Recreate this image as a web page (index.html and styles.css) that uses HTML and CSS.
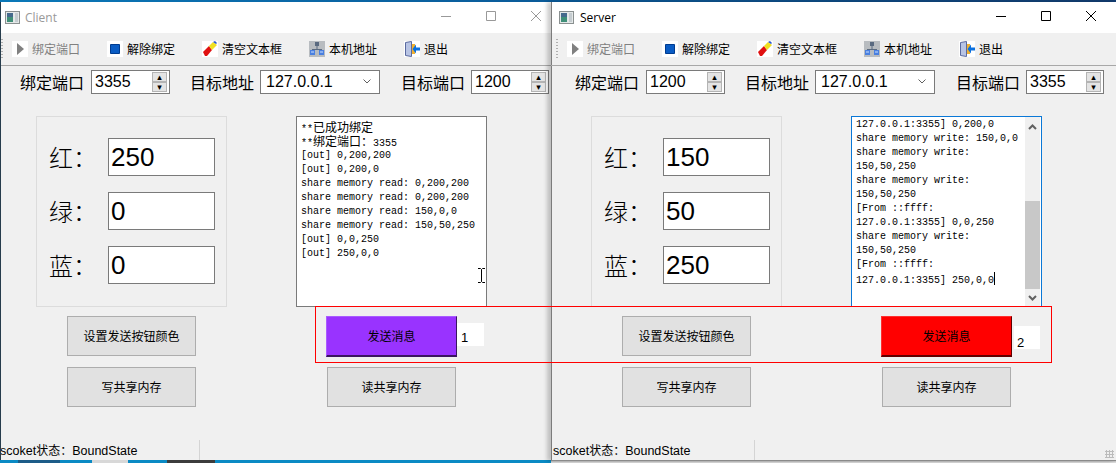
FILE: index.html
```html
<!DOCTYPE html>
<html lang="zh">
<head>
<meta charset="utf-8">
<title>Client / Server</title>
<link rel="stylesheet" href="styles.css">
</head>
<body>
<div class="desktop">
  <div class="topstrip"></div>
  <div class="bottomstrip"><i class="b1"></i><i class="b2"></i><i class="b3"></i><i class="b4"></i></div>

  <section class="window client">
    <header class="titlebar">
      <svg class="appicon" viewBox="0 0 15 13"><rect x=".5" y=".5" width="14" height="12" fill="#e4e8e8" stroke="#8a9090"/><rect x="2" y="2" width="6" height="9" fill="#3f8f78"/><rect x="2" y="2" width="6" height="4" fill="#456a8c"/><rect x="10" y="2" width="3" height="9" fill="#c5ccd0"/></svg>
      <span class="wintitle">Client</span>
      <span class="winbtns">
        <svg viewBox="0 0 10 10"><path d="M0 5.500h10"/></svg>
        <svg viewBox="0 0 10 10"><path d="M.5.5h9v9h-9z"/></svg>
        <svg viewBox="0 0 10 10"><path d="M0 0l10 10M10 0L0 10"/></svg>
      </span>
    </header>
    <div class="inner">
      <nav class="toolbar">
        <span class="grip"></span>
        <span class="tool off"><svg viewBox="0 0 16 16"><path class="w" d="M0 0h16v16H0z"/><path fill="#808080" d="M5 2l7 6-7 6z"/></svg>绑定端口</span>
        <span class="tool"><svg viewBox="0 0 16 16"><path class="w" d="M0 0h16v16H0z"/><path fill="#0a5cc4" stroke="#003c90" d="M3.500 3.500h9v9h-9z"/></svg>解除绑定</span>
        <span class="tool"><svg viewBox="0 0 16 16"><path class="w" d="M0 0h16v16H0z"/><path fill="#e01010" d="M1 11l6-6 3 4-5 6H3z"/><path fill="#f0e020" d="M7 5l4-4 4 3-5 5z"/><path fill="#2858d0" d="M11 1l2-1 2 2-1 1z"/></svg>清空文本框</span>
        <span class="tool"><svg viewBox="0 0 16 16"><path fill="#b8bcc0" d="M0 0h16v16H0z"/><path fill="#5a6a80" d="M6 1h4v4H6z"/><path fill="#5a6a80" d="M7.500 5h1v4h-1zM3 8h10v1H3z"/><path fill="#4a80e0" d="M1 9h5v5H1zM10 9h5v5h-5z"/><path fill="#8ab0f0" d="M2 10h3v2H2zM11 10h3v2h-3z"/></svg>本机地址</span>
        <span class="tool"><svg viewBox="0 0 16 16"><path class="w" d="M0 0h16v16H0z"/><path fill="#b8c4e4" stroke="#5a6aa0" d="M1.500 1.500l6 -1v15l-6-1z"/><path fill="#f0b030" d="M8 3h3v10H8z"/><path fill="#0a70e0" d="M16 6.500h-4V3.500L8.500 8l3.500 4.500V9.500h4z"/></svg>退出</span>
      </nav>
      <div class="formrow">
        <label class="fl">绑定端口</label>
        <span class="spin s1"><b>3355</b><span class="arrows"><i>▴</i><i>▾</i></span></span>
        <label class="fl l2">目标地址</label>
        <span class="combo"><b>127.0.0.1</b><svg viewBox="0 0 8 5"><path d="M.5.500l3.500 3.500 3.500-3.500"/></svg></span>
        <label class="fl l3">目标端口</label>
        <span class="spin s2"><b>1200</b><span class="arrows"><i>▴</i><i>▾</i></span></span>
      </div>
      <main class="board">
        <div class="col-a">
          <div class="colors">
            <div class="colorrow"><span class="cl">红：</span><span class="cv">250</span></div>
            <div class="colorrow"><span class="cl">绿：</span><span class="cv">0</span></div>
            <div class="colorrow"><span class="cl">蓝：</span><span class="cv">0</span></div>
          </div>
          <button class="btn first">设置发送按钮颜色</button>
          <button class="btn">写共享内存</button>
        </div>
        <div class="col-b">
          <div class="log"><div class="logtext"><span class="z">**<u>已成功绑定</u></span><span class="z">**<u>绑定端口：</u>3355</span>[out] 0,200,200
[out] 0,200,0
share memory read: 0,200,200
share memory read: 0,200,200
share memory read: 150,0,0
share memory read: 150,50,250
[out] 0,0,250
[out] 250,0,0</div></div>
          <div class="sendrow"><button class="send purple">发送消息</button><span class="count c1">1</span></div>
          <button class="btn read">读共享内存</button>
        </div>
      </main>
      <footer class="status"><span class="st">scoket<u>状态：</u>BoundState</span></footer>
    </div>
  </section>

  <section class="window server">
    <header class="titlebar">
      <svg class="appicon" viewBox="0 0 15 13"><rect x=".5" y=".5" width="14" height="12" fill="#e4e8e8" stroke="#8a9090"/><rect x="2" y="2" width="6" height="9" fill="#3f8f78"/><rect x="2" y="2" width="6" height="4" fill="#456a8c"/><rect x="10" y="2" width="3" height="9" fill="#c5ccd0"/></svg>
      <span class="wintitle">Server</span>
      <span class="winbtns">
        <svg viewBox="0 0 10 10"><path d="M0 5.500h10"/></svg>
        <svg viewBox="0 0 10 10"><path d="M.5.5h9v9h-9z"/></svg>
        <svg viewBox="0 0 10 10"><path d="M0 0l10 10M10 0L0 10"/></svg>
      </span>
    </header>
    <div class="inner">
      <nav class="toolbar">
        <span class="grip"></span>
        <span class="tool off"><svg viewBox="0 0 16 16"><path class="w" d="M0 0h16v16H0z"/><path fill="#808080" d="M5 2l7 6-7 6z"/></svg>绑定端口</span>
        <span class="tool"><svg viewBox="0 0 16 16"><path class="w" d="M0 0h16v16H0z"/><path fill="#0a5cc4" stroke="#003c90" d="M3.500 3.500h9v9h-9z"/></svg>解除绑定</span>
        <span class="tool"><svg viewBox="0 0 16 16"><path class="w" d="M0 0h16v16H0z"/><path fill="#e01010" d="M1 11l6-6 3 4-5 6H3z"/><path fill="#f0e020" d="M7 5l4-4 4 3-5 5z"/><path fill="#2858d0" d="M11 1l2-1 2 2-1 1z"/></svg>清空文本框</span>
        <span class="tool"><svg viewBox="0 0 16 16"><path fill="#b8bcc0" d="M0 0h16v16H0z"/><path fill="#5a6a80" d="M6 1h4v4H6z"/><path fill="#5a6a80" d="M7.500 5h1v4h-1zM3 8h10v1H3z"/><path fill="#4a80e0" d="M1 9h5v5H1zM10 9h5v5h-5z"/><path fill="#8ab0f0" d="M2 10h3v2H2zM11 10h3v2h-3z"/></svg>本机地址</span>
        <span class="tool"><svg viewBox="0 0 16 16"><path class="w" d="M0 0h16v16H0z"/><path fill="#b8c4e4" stroke="#5a6aa0" d="M1.500 1.500l6 -1v15l-6-1z"/><path fill="#f0b030" d="M8 3h3v10H8z"/><path fill="#0a70e0" d="M16 6.500h-4V3.500L8.500 8l3.500 4.500V9.500h4z"/></svg>退出</span>
      </nav>
      <div class="formrow">
        <label class="fl">绑定端口</label>
        <span class="spin s1"><b>1200</b><span class="arrows"><i>▴</i><i>▾</i></span></span>
        <label class="fl l2">目标地址</label>
        <span class="combo"><b>127.0.0.1</b><svg viewBox="0 0 8 5"><path d="M.5.500l3.500 3.500 3.500-3.500"/></svg></span>
        <label class="fl l3">目标端口</label>
        <span class="spin s2"><b>3355</b><span class="arrows"><i>▴</i><i>▾</i></span></span>
      </div>
      <main class="board">
        <div class="col-a">
          <div class="colors">
            <div class="colorrow"><span class="cl">红：</span><span class="cv">150</span></div>
            <div class="colorrow"><span class="cl">绿：</span><span class="cv">50</span></div>
            <div class="colorrow"><span class="cl">蓝：</span><span class="cv">250</span></div>
          </div>
          <button class="btn first">设置发送按钮颜色</button>
          <button class="btn">写共享内存</button>
        </div>
        <div class="col-b">
          <div class="log focus"><div class="logtext">127.0.0.1:3355] 0,200,0
share memory write: 150,0,0
share memory write:
150,50,250
share memory write:
150,50,250
[From ::ffff:
127.0.0.1:3355] 0,0,250
share memory write:
150,50,250
[From ::ffff:
127.0.0.1:3355] 250,0,0<span class="caret"></span></div>
            <div class="scroll"><svg viewBox="0 0 9 6"><path d="M1 5l3.500-3.500L8 5"/></svg><span class="thumb"></span><svg class="down" viewBox="0 0 9 6"><path d="M1 1l3.500 3.500L8 1"/></svg></div>
          </div>
          <div class="sendrow"><button class="send red">发送消息</button><span class="count c2">2</span></div>
          <button class="btn read">读共享内存</button>
        </div>
      </main>
      <footer class="status"><span class="st">scoket<u>状态：</u>BoundState</span><span class="sizegrip"></span></footer>
    </div>
  </section>

  <svg class="ibeam" viewBox="0 0 7 15"><path d="M0 .5h2.500L3.500 1.500 4.500.5H7M3.500 1.500v12M0 14.500h2.500l1-1 1 1H7"/></svg>
  <div class="highlight"></div>
</div>
</body>
</html>
```
FILE: styles.css
```css
* { box-sizing: border-box; }
html, body { margin: 0; padding: 0; }
body { width: 1116px; height: 463px; overflow: hidden; }
u { text-decoration: none; }
b { font-weight: normal; }
i { font-style: normal; }

.desktop { position: relative; width: 1116px; height: 463px; background: #263c4c; overflow: hidden; font-family: "Noto Sans CJK SC", sans-serif; color: #000; }
.topstrip { position: absolute; left: 0; top: 0; width: 1116px; height: 2px; background: linear-gradient(90deg, #0a78b8, #0a5a98 50%, #123c70); }
.bottomstrip { position: absolute; left: 0; top: 460px; width: 1116px; height: 3px; background: #0a8ac4; }
.bottomstrip i { position: absolute; top: 0; height: 3px; }
.b1 { left: 18px; width: 42px; background: #1c5c88; }
.b2 { left: 92px; width: 36px; background: #d8d8d8; }
.b3 { left: 167px; width: 48px; background: #3c3c3c; }
.b4 { left: 551px; width: 565px; background: linear-gradient(#a8a8a8, #e4e4e4); }

.window { position: absolute; top: 2px; height: 458px; background: #f0f0f0; overflow: hidden; display: flex; flex-direction: column; }
.client { left: 1px; width: 550px; }
.server { left: 551px; width: 565px; height: 459px; border-left: 1px solid #7c7c7c; border-bottom: 1px solid #8a8a8a; box-shadow: -4px 0 4px rgba(0,0,0,.2); overflow: visible; }

.titlebar { flex: none; height: 31px; background: #fff; display: flex; align-items: center; padding-left: 7px; }
.client .titlebar { padding-left: 4px; color: #999; }
.appicon { width: 15px; height: 13px; margin-top: -1px; }
.wintitle { margin-left: 6px; font: 12px/16px "Open Sans", sans-serif; color: #000; }
.client .wintitle { color: #999; margin-left: 5px; }
.winbtns { display: flex; position: absolute; top: 9px; }
.client .winbtns { left: 440px; }
.server .winbtns { left: 444px; }
.winbtns svg { width: 10px; height: 10px; margin-right: 35px; fill: none; stroke: #000; stroke-width: 1; flex: none; }
.winbtns svg:last-child { margin-right: 0; }
.client .winbtns svg { stroke: #999; }

.inner { flex: 1; display: flex; flex-direction: column; width: 565px; min-height: 0; }
.client .inner { margin-left: -5px; }
.server .inner { margin-left: -1px; }

.toolbar { flex: none; height: 33px; border-bottom: 1px solid #a8a8a8; display: flex; align-items: center; gap: 27px; padding: 0 0 1px 16px; position: relative; font-size: 12px; }
.grip { position: absolute; left: 5px; top: 6px; width: 2px; height: 21px; background: repeating-linear-gradient(#b0b0b0 0 1px, transparent 1px 3px); }
.tool { display: flex; align-items: center; gap: 4px; line-height: 16px; white-space: nowrap; }
.tool svg { width: 16px; height: 16px; }
.tool .w { fill: #fff; }
.tool.off { color: #808080; }

.formrow { flex: none; height: 25px; margin-top: 3px; display: flex; align-items: center; padding-left: 24px; font-size: 16px; }
.fl { width: 62px; flex: none; white-space: nowrap; line-height: 24px; }
.l2 { margin-left: 20px; }
.l3 { margin-left: 21px; }
.spin, .combo { height: 24px; flex: none; background: #fff; border: 1px solid #7a7a7a; display: flex; align-items: center; font: 16px/22px "Liberation Sans", sans-serif; margin-left: 8px; position: relative; }
.spin { padding-left: 3px; }
.spin b, .combo b { flex: 1; }
.s1 { width: 79px; margin-left: 9px; }
.s2 { width: 78px; }
.combo { width: 120px; padding-left: 5px; }
.combo svg { width: 8px; height: 5px; margin-right: 8px; fill: none; stroke: #606060; }
.arrows { width: 15px; height: 20px; margin-right: 2px; display: flex; flex-direction: column; gap: 0; }
.arrows i { flex: 1; display: flex; align-items: center; justify-content: center; background: #e4e4e4; border: 1px solid #b4b4b4; font: 9px/8px "DejaVu Sans", sans-serif; color: #000; }

.board { flex: none; height: 340px; display: flex; padding-top: 22px; }
.col-a { width: 254px; padding-left: 40px; display: flex; flex-direction: column; align-items: flex-start; }
.col-b { width: 300px; padding-left: 46px; display: flex; flex-direction: column; align-items: flex-start; }

.colors { width: 191px; height: 191px; border: 1px solid #dcdcdc; padding: 21px 0 0 12px; display: flex; flex-direction: column; gap: 16px; }
.colorrow { display: flex; align-items: center; height: 38px; }
.cl { width: 59px; font-size: 24px; font-weight: 300; line-height: 38px; white-space: nowrap; }
.cv { width: 107px; height: 38px; background: #fff; border: 1px solid #7a7a7a; font: 26px/36px "Liberation Sans", sans-serif; padding-left: 2px; }

.btn { width: 129px; height: 40px; background: #e1e1e1; border: 1px solid #adadad; font: 12px/16px "Noto Sans CJK SC", sans-serif; color: #000; padding: 0; }
.btn.first { margin: 9px 0 0 31px; }
.col-a .btn + .btn { margin: 11px 0 0 31px; }
.btn.read { margin: 10px 0 0 31px; }

.log { width: 191px; height: 191px; flex: none; background: #fff; border: 1px solid #7a7a7a; padding: 4px 0 0 4px; font: 10px/14px "Liberation Mono", monospace; white-space: pre; display: flex; }
.log u { font: 12px/14px "Noto Sans CJK SC", sans-serif; }
.log .z { display: block; height: 14px; margin-top: -1px; margin-bottom: 1px; }
.log .z + .z { margin-top: -1px; }
.log.focus { border-color: #0a78d7; padding: 0 0 0 4px; justify-content: space-between; }
.logtext { flex: 1; }
.focus .logtext { margin-top: 1px; }
.caret { display: inline-block; width: 1px; height: 13px; background: #000; vertical-align: -2px; }
.scroll { width: 15px; margin-right: 1px; background: #f0f0f0; display: flex; flex-direction: column; align-items: center; position: relative; padding-top: 7px; }
.scroll svg { width: 9px; height: 6px; fill: none; stroke: #606060; stroke-width: 2; flex: none; }
.scroll .thumb { width: 15px; height: 88px; background: #c8c8c8; margin-top: 71px; flex: none; }
.scroll .down { margin-top: 6px; }

.sendrow { display: flex; align-items: flex-start; margin: 9px 0 0 30px; }
.send { width: 131px; height: 41px; font: 12px/16px "Noto Sans CJK SC", sans-serif; color: #000; padding: 0; border: 1px solid; border-width: 1px 1px 2px 1px; }
.purple { background: #9933ff; border-color: #a95cff #3a1560 #3a1560 #a95cff; }
.red { background: #ff0000; border-color: #ff3030 #600000 #600000 #ff3030; }
.count { width: 27px; height: 23px; background: #fff; font: 13px/24px "Liberation Sans", sans-serif; padding: 3px 0 0 4px; margin-top: 7px; overflow: hidden; }
.c2 { margin: 10px 0 0 2px; width: 26px; padding: 5px 0 0 3px; }

.status { flex: 1; display: flex; align-items: center; position: relative; font: 12px/16px "Noto Sans CJK SC", sans-serif; padding-top: 6px; }
.client .status { padding-left: 4px; }
.server .status { padding-left: 2px; }
.st { font-family: "Liberation Sans", sans-serif; font-size: 12.5px; }
.st u { font: 12px/16px "Noto Sans CJK SC", sans-serif; }
.status::after { content: ""; position: absolute; left: 203px; top: 6px; height: 20px; border-left: 1px solid #d4d4d4; }
.sizegrip { position: absolute; right: 2px; bottom: 2px; width: 9px; height: 8px; background: radial-gradient(#bcbcbc 50%, transparent 55%) 0 0 / 3px 3px; }

.ibeam { position: absolute; left: 478px; top: 268px; width: 7px; height: 15px; fill: none; stroke: #000; stroke-width: 1; }
.highlight { position: absolute; left: 315px; top: 306px; width: 737px; height: 57px; border: 1px solid #f00; pointer-events: none; }
```
